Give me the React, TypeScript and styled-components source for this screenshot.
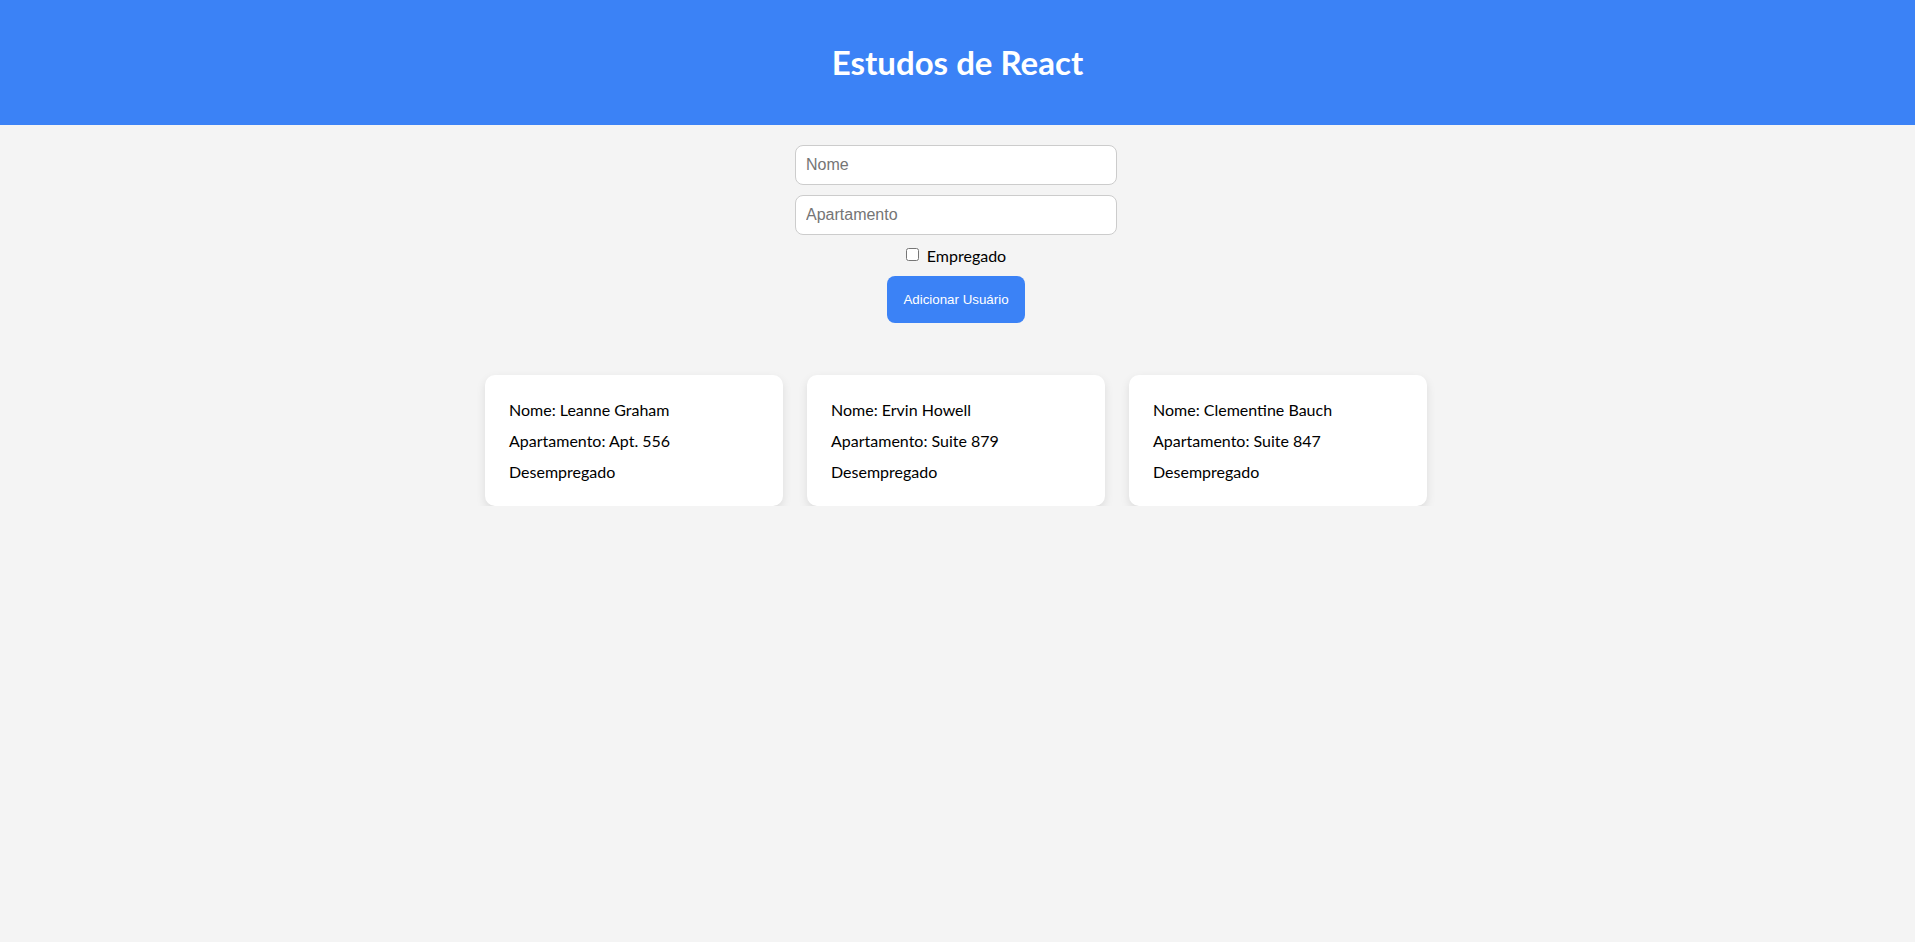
import React, { useState } from "react";
import styled, { createGlobalStyle } from "styled-components";

const GlobalStyle = createGlobalStyle`
  html, body {
    margin: 0;
    padding: 0;
    background: #f4f4f4;
    font-family: Lato, "Noto Sans", sans-serif;
    font-size: 16px;
    color: #000;
  }
`;

const Header = styled.header`
  background: #3b82f6;
  padding: 20px;
  text-align: center;
`;

const Title = styled.h1`
  margin: 21.44px 0;
  font-family: Lato, "Noto Sans", sans-serif;
  font-size: 33px;
  line-height: 42.5px;
  font-weight: 700;
  color: #ffffff;
`;

const Main = styled.main`
  padding: 20px 3px 0 0;
  display: flex;
  flex-direction: column;
  align-items: center;
`;

const Form = styled.form`
  display: flex;
  flex-direction: column;
  align-items: center;
  gap: 10px;
`;

const TextInput = styled.input`
  width: 300px;
  padding: 10px;
  font-family: "Liberation Sans", Arial, sans-serif;
  font-size: 16px;
  border: 1px solid #ccc;
  border-radius: 8px;
  background: #fff;
  outline: none;
  &::placeholder {
    color: #757575;
  }
`;

const CheckLabel = styled.label`
  display: flex;
  align-items: center;
  font-size: 16px;
  line-height: 21px;
  color: #000;
`;

const CheckBox = styled.input`
  width: 13px;
  height: 13px;
  margin: -2px 8px 0 0;
`;

const SubmitButton = styled.button`
  padding: 16px;
  border: none;
  border-radius: 8px;
  background: #3b82f6;
  color: #fff;
  font-family: "Liberation Sans", Arial, sans-serif;
  font-size: 13.333px;
  cursor: pointer;
`;

const CardList = styled.section`
  margin-top: 52px;
  display: flex;
  flex-wrap: wrap;
  justify-content: center;
  gap: 24px;
`;

const Card = styled.article`
  width: 250px;
  padding: 24px;
  background: #fff;
  border-radius: 10px;
  box-shadow: 0 4px 10px rgba(0, 0, 0, 0.1);
  display: flex;
  flex-direction: column;
  gap: 10px;
`;

const CardLine = styled.p`
  margin: 0;
  font-size: 16px;
  line-height: 21px;
  color: #000;
`;

type User = { name: string; apt: string; employed: boolean };

const initialUsers: User[] = [
  { name: "Leanne Graham", apt: "Apt. 556", employed: false },
  { name: "Ervin Howell", apt: "Suite 879", employed: false },
  { name: "Clementine Bauch", apt: "Suite 847", employed: false },
];

export default function App() {
  const [users, setUsers] = useState<User[]>(initialUsers);
  const [name, setName] = useState("");
  const [apt, setApt] = useState("");
  const [employed, setEmployed] = useState(false);

  const onSubmit = (e: React.FormEvent) => {
    e.preventDefault();
    if (!name) return;
    setUsers([...users, { name, apt, employed }]);
    setName("");
    setApt("");
    setEmployed(false);
  };

  return (
    <>
      <GlobalStyle />
      <Header>
        <Title>Estudos de React</Title>
      </Header>
      <Main>
        <Form onSubmit={onSubmit}>
          <TextInput placeholder="Nome" value={name} onChange={(e) => setName(e.target.value)} />
          <TextInput placeholder="Apartamento" value={apt} onChange={(e) => setApt(e.target.value)} />
          <CheckLabel>
            <CheckBox type="checkbox" checked={employed} onChange={(e) => setEmployed(e.target.checked)} />
            Empregado
          </CheckLabel>
          <SubmitButton type="submit">Adicionar Usuário</SubmitButton>
        </Form>
        <CardList>
          {users.map((u, i) => (
            <Card key={i}>
              <CardLine>Nome: {u.name}</CardLine>
              <CardLine>Apartamento: {u.apt}</CardLine>
              <CardLine>{u.employed ? "Empregado" : "Desempregado"}</CardLine>
            </Card>
          ))}
        </CardList>
      </Main>
    </>
  );
}
